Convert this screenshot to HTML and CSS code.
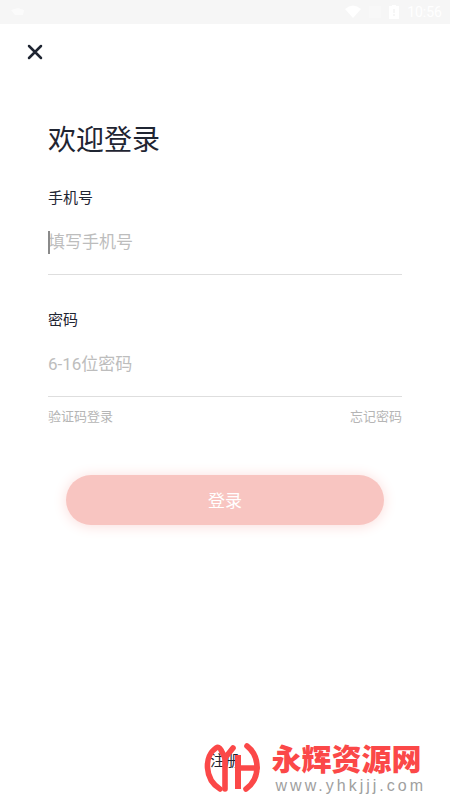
FILE: index.html
```html
<!DOCTYPE html>
<html lang="zh-CN">
<head>
<meta charset="utf-8">
<meta name="viewport" content="width=device-width, initial-scale=1">
<title>欢迎登录</title>
<link rel="stylesheet" href="styles.css">
</head>
<body>
<header class="status">
  <svg class="status-app" width="14" height="10" viewBox="0 0 14 10" aria-hidden="true"><path d="M0 3 7 1l6 2-1 5H4Z"/></svg>
  <div class="status-right">
    <svg width="16" height="14" viewBox="0 0 16 14" aria-hidden="true"><path d="M0 4Q8-3 16 4L8 13Z"/></svg>
    <svg class="faint" width="12" height="14" viewBox="0 0 12 14" aria-hidden="true"><path d="M0 1h12v12H0Z"/></svg>
    <svg width="10" height="14" viewBox="0 0 10 14" aria-hidden="true"><path fill-rule="evenodd" d="M3 0h4v1h3v13H0V1h3ZM4 4v4h2V4Zm0 5v2h2V9Z"/></svg>
    <span>10:56</span>
  </div>
</header>
<nav class="nav">
  <button class="close" type="button" aria-label="关闭">
    <svg width="16" height="16" viewBox="0 0 16 16" aria-hidden="true"><path d="M2 2 14 14M14 2 2 14"/></svg>
  </button>
</nav>
<main class="main">
  <h1 class="title">欢迎登录</h1>
  <form class="form">
    <div class="field">
      <label for="phone">手机号</label>
      <div class="entry">
        <input id="phone" type="tel" placeholder="填写手机号">
        <span class="caret"></span>
      </div>
    </div>
    <div class="field">
      <label for="password">密码</label>
      <div class="entry">
        <input id="password" type="password" placeholder="6-16位密码">
      </div>
    </div>
    <div class="links">
      <a href="#code">验证码登录</a>
      <a href="#forgot">忘记密码</a>
    </div>
    <button class="submit" type="submit">登录</button>
  </form>
</main>
<footer class="footer"><a href="#register">注册</a></footer>
<aside class="mark">
  <svg width="56" height="52" viewBox="0 0 56 52" aria-hidden="true">
    <path d="M16 46C0 36 0 13 12 5Q15 3 17 7L21 15L29 5"/>
    <path d="M21 15V46"/>
    <path class="stem" d="M34 12V46"/>
    <path d="M34 25H53"/>
    <path d="M43 3C56 13 57 35 42 46"/>
  </svg>
  <div class="mark-text">
    <strong>永辉资源网</strong>
    <span>www.yhkjjj.com</span>
  </div>
</aside>
</body>
</html>
```
FILE: styles.css
```css
* {
  box-sizing: border-box;
}

body {
  margin: 0;
  min-height: 100vh;
  display: flex;
  flex-direction: column;
  position: relative;
  background: #fff;
  color: #1f2532;
  font-family: Roboto, "Noto Sans CJK SC", sans-serif;
}

a {
  color: inherit;
  text-decoration: none;
}

.status {
  height: 24px;
  padding: 0 8px 0 11px;
  display: flex;
  align-items: center;
  justify-content: space-between;
  background: #f6f6f6;
  color: #fff;
  fill: #fff;
  font-size: 14px;
}

.status-app {
  opacity: 0.6;
}

.status-right {
  display: flex;
  align-items: center;
  gap: 8px;
}

.faint {
  opacity: 0.3;
}

.nav {
  padding: 20px 27px;
}

.close {
  display: block;
  padding: 0;
  border: 0;
  background: none;
}

.close svg {
  display: block;
  fill: none;
  stroke: #1f2532;
  stroke-width: 2.5;
  stroke-linecap: round;
}

.main {
  flex: 1;
  padding: 41px 48px 0;
}

.title {
  margin: 0;
  font-size: 28px;
  line-height: 40px;
  font-weight: 400;
}

.form {
  margin-top: 25px;
}

.field {
  margin-bottom: 33px;
}

.field label {
  display: block;
  font-size: 15px;
  line-height: 24px;
}

.entry {
  position: relative;
  border-bottom: 1px solid #dedede;
}

.entry input {
  display: block;
  width: 100%;
  height: 64px;
  padding: 0;
  border: 0;
  outline: 0;
  background: none;
  color: inherit;
  font: inherit;
  font-size: 17px;
}

.entry input::placeholder {
  color: #bdbdbd;
  opacity: 1;
}

.caret {
  position: absolute;
  left: 0;
  top: 21px;
  width: 2px;
  height: 23px;
  background: #8a8a8a;
}

.links {
  margin-top: -24px;
  display: flex;
  justify-content: space-between;
  color: #b5b5b5;
  font-size: 13px;
  line-height: 22px;
}

.submit {
  display: block;
  width: calc(100% - 36px);
  height: 50px;
  margin: 47px auto 0;
  padding: 0 0 2px;
  border: 0;
  border-radius: 25px;
  background: #f8c5c1;
  box-shadow: 0 1px 14px #fbdcda;
  color: #fff;
  font: inherit;
  font-size: 17px;
}

.footer {
  padding-bottom: 27px;
  text-align: center;
  font-size: 15px;
  line-height: 24px;
}

.mark {
  position: absolute;
  right: 24px;
  bottom: 5px;
  display: flex;
  align-items: center;
  gap: 12px;
}

.mark svg {
  fill: none;
  stroke: #fb4848;
  stroke-width: 5.6;
  stroke-linecap: round;
  stroke-linejoin: round;
}

.mark .stem {
  stroke-width: 6;
  stroke-linecap: butt;
}

.mark-text {
  display: flex;
  flex-direction: column;
}

.mark-text strong {
  color: #fb4848;
  font-size: 30px;
  line-height: 34px;
  font-weight: 900;
}

.mark-text span {
  padding-left: 4px;
  color: #a0a0a0;
  font-family: "Liberation Sans", sans-serif;
  font-size: 16px;
  line-height: 18px;
  letter-spacing: 3px;
}
```
